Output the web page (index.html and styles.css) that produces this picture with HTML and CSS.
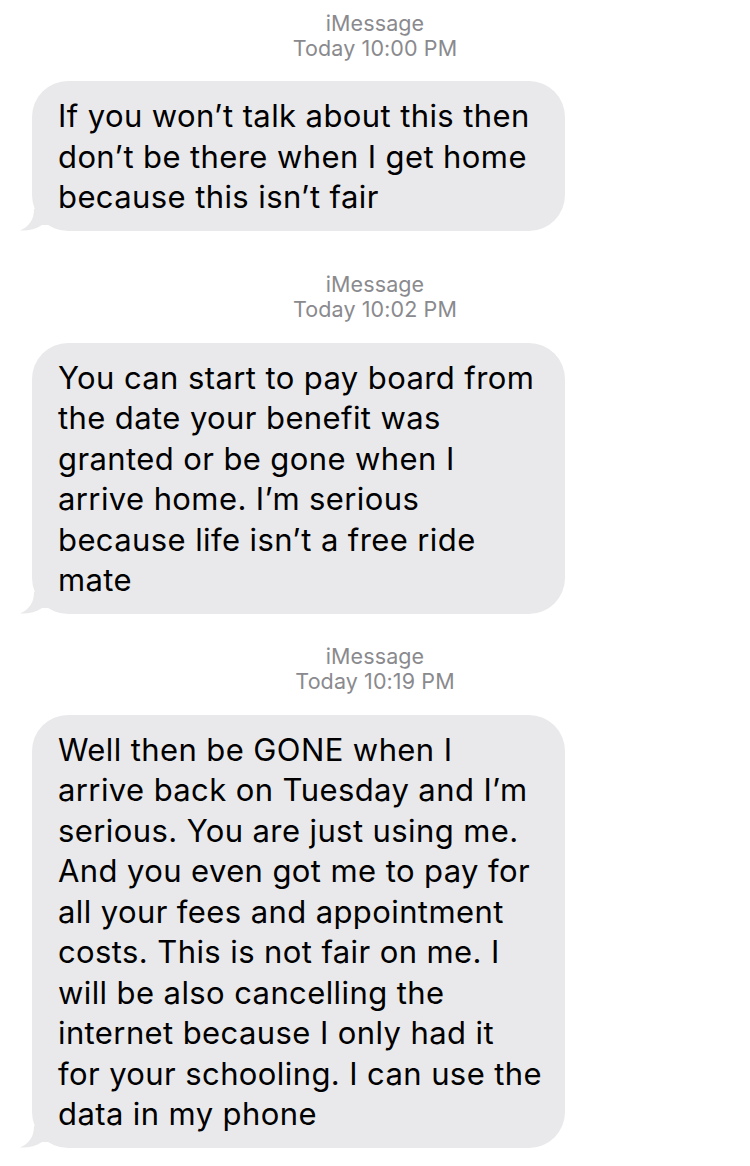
FILE: index.html
```html
<!DOCTYPE html>
<html>
<head>
<meta charset="utf-8">
<link rel="stylesheet" href="styles.css">
</head>
<body>
<div class="thread">
  <div class="stamp first">
    <div>iMessage</div>
    <div>Today 10:00 PM</div>
  </div>
  <div class="bubble">
    If you won’t talk about this then<br>don’t be there when I get home<br>because this isn’t fair
    <svg class="tail" width="30" height="22" viewBox="0 0 30 22"><path d="M14 0 C14 10 10 17 0 21.5 C8 22 16 20 22 16 L30 16 L30 0 Z" fill="#e9e9eb"/></svg>
  </div>
  <div class="stamp second">
    <div>iMessage</div>
    <div>Today 10:02 PM</div>
  </div>
  <div class="bubble">
    You can start to pay board from<br>the date your benefit was<br>granted or be gone when I<br>arrive home. I’m serious<br>because life isn’t a free ride<br>mate
    <svg class="tail" width="30" height="22" viewBox="0 0 30 22"><path d="M14 0 C14 10 10 17 0 21.5 C8 22 16 20 22 16 L30 16 L30 0 Z" fill="#e9e9eb"/></svg>
  </div>
  <div class="stamp third">
    <div>iMessage</div>
    <div>Today 10:19 PM</div>
  </div>
  <div class="bubble">
    Well then be GONE when I<br>arrive back on Tuesday and I’m<br>serious. You are just using me.<br>And you even got me to pay for<br>all your fees and appointment<br>costs. This is not fair on me. I<br>will be also cancelling the<br>internet because I only had it<br>for your schooling. I can use the<br>data in my phone
    <svg class="tail" width="30" height="22" viewBox="0 0 30 22"><path d="M14 0 C14 10 10 17 0 21.5 C8 22 16 20 22 16 L30 16 L30 0 Z" fill="#e9e9eb"/></svg>
  </div>
</div>
</body>
</html>
```
FILE: styles.css
```css
html, body {
  margin: 0;
  padding: 0;
  background: #ffffff;
}
.thread {
  width: 750px;
  display: flex;
  flex-direction: column;
  align-items: flex-start;
  font-family: Inter, "Liberation Sans", sans-serif;
}
.stamp {
  align-self: stretch;
  text-align: center;
  color: #8a8a8e;
  font-size: 21.5px;
  line-height: 25px;
  letter-spacing: 0.1px;
}
.stamp.first { margin-top: 11px; margin-bottom: 20px; }
.stamp.second { margin-top: 41px; margin-bottom: 21px; }
.stamp.third { margin-top: 30px; margin-bottom: 21px; }
.bubble {
  position: relative;
  margin-left: 32px;
  width: 533px;
  box-sizing: border-box;
  padding: 15px 10px 13px 26px;
  background: #e9e9eb;
  border-radius: 36px;
  color: #000;
  font-size: 31px;
  line-height: 40.5px;
  letter-spacing: 0.4px;
  white-space: nowrap;
}
.tail {
  position: absolute;
  left: -12px;
  bottom: 0;
}
```
